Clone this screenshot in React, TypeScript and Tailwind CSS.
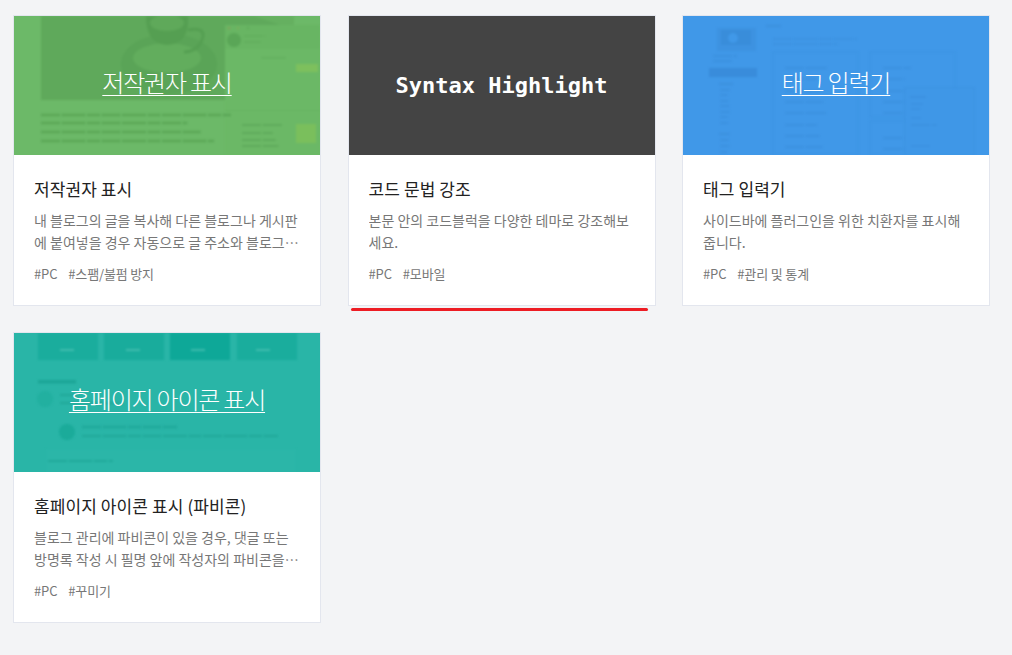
import type { ReactNode } from "react";

interface PluginItem {
  id: string;
  cover: string;
  coverClass: string;
  code?: boolean;
  art?: ReactNode;
  title: string;
  description: string;
  tags: string[];
}

// faded text rows of the blurred screenshots behind the covers
const rows = (x: number, ys: number[], w: number, h = 2) =>
  ys.map((y, i) => (
    <line
      key={y}
      x1={x}
      x2={x + w - ((i * 23) % 30) * (w / 100)}
      y1={y}
      y2={y}
      strokeWidth={h}
      strokeDasharray="19 1.5 24 1.5 13 1.5"
    />
  ));

const CopyrightArt = (
  <svg viewBox="0 0 306 139" className="absolute inset-0 h-full w-full blur-[0.8px]">
    <rect x="27" y="0" width="253" height="84" fill="#5fa95b" />
    <path d="M240 0 L280 14 V0 Z" fill="#65b060" />
    <ellipse cx="155" cy="48" rx="48" ry="30" fill="#5aa457" />
    <ellipse cx="153" cy="42" rx="34" ry="15" fill="#62ad5d" />
    <path d="M132 0 h42 q2 28 -21 29 q-21 -1 -21 -29Z" fill="#559f52" />
    <ellipse cx="153" cy="7" rx="17" ry="8" fill="#5fa95a" />
    <path d="M174 14 q22 -4 12 14 q-6 8 -16 8" fill="none" stroke="#559f52" strokeWidth="3" />
    <rect x="211" y="9" width="95" height="130" fill="#6bb866" />
    <rect x="211" y="9" width="95" height="24" fill="#68b563" />
    <circle cx="215" cy="12" r="1.5" fill="#7fa55c" />
    <circle cx="224" cy="12" r="1.5" fill="#78b05e" />
    <circle cx="234" cy="12" r="1.5" fill="#62ae5c" />
    <circle cx="220" cy="24" r="7" fill="#5aa657" />
    <rect x="282" y="48" width="22" height="8" fill="#7dc05d" />
    <rect x="282" y="108" width="20" height="19" fill="#7abf5c" />
    <rect x="211" y="94" width="95" height="1" fill="#66b361" />
    <g stroke="#5ba757">{rows(27, [99, 107, 116, 125], 190, 2.5)}</g>
    <g stroke="#5fab5b">{rows(228, [109, 117, 124, 130], 40, 2)}</g>
    <g stroke="#62ae5d">{rows(230, [20, 26], 22, 1.5)}</g>
    <rect x="247" y="41" width="25" height="1.5" fill="#63af5e" />
  </svg>
);

const TagArt = (
  <svg viewBox="0 0 306 139" className="absolute inset-0 h-full w-full blur-[0.8px]">
    <rect x="34" y="12" width="39" height="23" fill="#3d92e1" />
    <rect x="38" y="14" width="30" height="15" fill="#398dda" />
    <circle cx="50" cy="22" r="5" fill="#4098e8" />
    <rect x="26" y="52" width="48" height="9" fill="#398cdb" />
    <rect x="90" y="36" width="85" height="103" fill="none" stroke="#3d93e3" />
    <rect x="187" y="36" width="85" height="65" fill="none" stroke="#3d93e3" />
    <rect x="187" y="105" width="85" height="34" fill="none" stroke="#3d93e3" />
    <g stroke="#3c91e0">
      {rows(30, [40, 45], 24, 2)}
      {rows(37, [74, 79, 85, 90, 96, 101, 107, 124, 130, 136], 10, 2)}
      {rows(36, [68, 118], 14, 2.5)}
      {rows(83, [10], 15, 2.5)}
      {rows(90, [23, 28], 84, 1.5)}
      {rows(102, [52, 63, 75, 86, 97, 109, 120, 131], 42, 2)}
      {rows(200, [52, 63, 75, 86, 97, 122, 133], 28, 2)}
    </g>
    <rect x="222" y="72" width="69" height="67" fill="#3f97e7" stroke="#3c91e0" />
    <g stroke="#3c91e0">
      {rows(227, [81], 16, 2)}
      {rows(228, [88, 93, 102], 12, 1.5)}
      {rows(228, [109, 130], 26, 1.5)}
    </g>
  </svg>
);

const FaviconArt = (
  <svg viewBox="0 0 306 139" className="absolute inset-0 h-full w-full blur-[0.8px]">
    <rect x="24" y="0" width="60" height="27" fill="#1aad9d" />
    <rect x="90" y="0" width="60" height="27" fill="#19ac9c" />
    <rect x="156" y="0" width="60" height="27" fill="#0ea898" />
    <rect x="223" y="0" width="60" height="27" fill="#1aad9d" />
    <g stroke="#4cc2b4">
      {rows(46, [17], 14, 1.5)}
      {rows(112, [17], 14, 1.5)}
      {rows(177, [17], 14, 1.5)}
      {rows(242, [17], 14, 1.5)}
    </g>
    <rect x="24" y="47" width="38" height="3.5" fill="#1ca697" />
    <circle cx="31" cy="66" r="8" fill="#22b0a0" />
    <circle cx="53" cy="99" r="8" fill="#1bab9a" />
    <rect x="32" y="116" width="250" height="23" fill="#2bb6a8" />
    <g stroke="#20a99a">
      {rows(46, [62], 20, 2)}
      {rows(46, [70], 63, 2)}
      {rows(68, [94], 95, 2.5)}
      {rows(68, [103], 196, 2)}
      {rows(34, [128], 65, 2)}
    </g>
  </svg>
);

const plugins: PluginItem[] = [
  {
    id: "copyright",
    cover: "저작권자 표시",
    coverClass: "bg-[#6cb968]",
    art: CopyrightArt,
    title: "저작권자 표시",
    description:
      "내 블로그의 글을 복사해 다른 블로그나 게시판에 붙여넣을 경우 자동으로 글 주소와 블로그 이름이 함께 표시됩니다.",
    tags: ["#PC", "#스팸/불펌 방지"],
  },
  {
    id: "syntax",
    cover: "Syntax Highlight",
    coverClass: "bg-[#444444]",
    code: true,
    title: "코드 문법 강조",
    description: "본문 안의 코드블럭을 다양한 테마로 강조해보세요.",
    tags: ["#PC", "#모바일"],
  },
  {
    id: "tag",
    cover: "태그 입력기",
    coverClass: "bg-[#4098e8]",
    art: TagArt,
    title: "태그 입력기",
    description: "사이드바에 플러그인을 위한 치환자를 표시해줍니다.",
    tags: ["#PC", "#관리 및 통계"],
  },
  {
    id: "favicon",
    cover: "홈페이지 아이콘 표시",
    coverClass: "bg-[#29b5a7]",
    art: FaviconArt,
    title: "홈페이지 아이콘 표시 (파비콘)",
    description:
      "블로그 관리에 파비콘이 있을 경우, 댓글 또는 방명록 작성 시 필명 앞에 작성자의 파비콘을 함께 표시해 줍니다.",
    tags: ["#PC", "#꾸미기"],
  },
];

function PluginCard({ item }: { item: PluginItem }) {
  return (
    <div className="relative h-[291px] border border-[#e3e6ee] bg-white">
      <div className={`relative flex h-[139px] items-center justify-center overflow-hidden ${item.coverClass}`}>
        {item.art}
        {item.code ? (
          <span className="relative font-['DejaVu_Sans_Mono',monospace] text-[22px] font-bold text-white">
            {item.cover}
          </span>
        ) : (
          <span className="relative mb-[8px] text-[24px] font-light tracking-tighter text-white underline decoration-1 underline-offset-3">
            {item.cover}
          </span>
        )}
      </div>
      <div className="px-5 pt-[21px]">
        <h3 className="text-[17px] leading-[26px] font-normal tracking-[0.1px] text-[#222222]">{item.title}</h3>
        <p className="mt-[7px] line-clamp-2 text-[14px] leading-[22px] break-all text-[#777777]">
          {item.description}
        </p>
        <div className="mt-[11px] flex gap-[11px] text-[13px] leading-[20px] tracking-[-0.15px] text-[#777777]">
          {item.tags.map((tag) => (
            <span key={tag}>{tag}</span>
          ))}
        </div>
      </div>
      {item.code && (
        <div className="absolute top-[292px] left-[2px] h-[3px] w-[297px] rounded-full bg-[#ed1c24]" />
      )}
    </div>
  );
}

function App() {
  return (
    <div className="h-[655px] overflow-hidden bg-[#f3f4f6] pt-[15px] pl-[13px] font-['Noto_Sans_CJK_KR','Noto_Sans',sans-serif]">
      <div className="grid w-[977px] grid-cols-3 gap-x-[26.5px] gap-y-[26px]">
        {plugins.map((item) => (
          <PluginCard key={item.id} item={item} />
        ))}
      </div>
    </div>
  );
}

export default App;
